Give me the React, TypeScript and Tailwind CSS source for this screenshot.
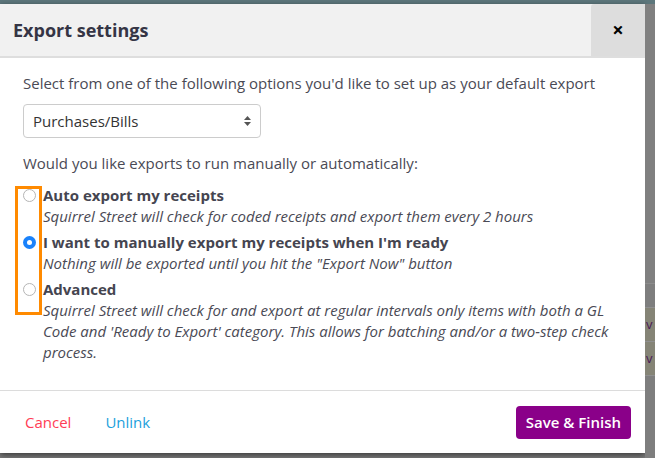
import React from "react"

const font = { fontFamily: '"Open Sans", "Liberation Sans", sans-serif' }

type Option = {
  title: string
  desc: string
  checked?: boolean
}

const options: Option[] = [
  {
    title: "Auto export my receipts",
    desc: "Squirrel Street will check for coded receipts and export them every 2 hours",
  },
  {
    title: "I want to manually export my receipts when I'm ready",
    desc: 'Nothing will be exported until you hit the "Export Now" button',
    checked: true,
  },
  {
    title: "Advanced",
    desc: "Squirrel Street will check for and export at regular intervals only items with both a GL Code and 'Ready to Export' category. This allows for batching and/or a two-step check process.",
  },
]

function Radio({ checked }: { checked?: boolean }) {
  if (checked) {
    return (
      <span className="flex h-[13px] w-[13px] items-center justify-center rounded-full bg-[#1a82fb]">
        <span className="h-[5px] w-[5px] rounded-full bg-white" />
      </span>
    )
  }
  return <span className="block h-[13px] w-[13px] rounded-full border border-[#b5b5b5] bg-white" />
}

export default function App() {
  return (
    <div className="flex h-[458px] w-[655px] flex-col overflow-hidden bg-[#7b7b7b]" style={font}>
      <div className="h-[4px] w-full shrink-0 bg-[#5d777c]" />
      <div className="flex flex-1">
        <div className="flex h-[449px] w-[645px] shrink-0 flex-col bg-white shadow-[0_2px_6px_rgba(0,0,0,0.55)]">
          {/* header */}
          <div className="flex h-[54px] shrink-0 items-stretch justify-between border-b-2 border-[#dedede] bg-[#f1f1f1]">
            <h2 className="flex items-center pl-[13px] text-[18px] font-bold text-[#353545]">Export settings</h2>
            <button className="flex w-[54px] items-center justify-center rounded-tl-[3px] bg-[#dddddd] text-[20px] font-bold leading-none text-black">
              ×
            </button>
          </div>

          {/* body */}
          <div className="flex-1 px-[23px] pt-[15px] text-[15px] text-[#4a4a55]">
            <p className="leading-[21px]">Select from one of the following options you'd like to set up as your default export</p>
            <div className="mt-[10px] flex h-[34px] w-[238px] items-center justify-between rounded-[4px] border border-[#cccccc] pl-[9px] pr-[9px]">
              <span className="text-[15px] text-[#333]">Purchases/Bills</span>
              <span className="flex flex-col items-center gap-[2px]">
                <svg width="7" height="4" viewBox="0 0 7 4"><path d="M0 4 L3.5 0 L7 4 Z" fill="#555" /></svg>
                <svg width="7" height="4" viewBox="0 0 7 4"><path d="M0 0 L3.5 4 L7 0 Z" fill="#555" /></svg>
              </span>
            </div>
            <p className="mt-[15px] leading-[21px]">Would you like exports to run manually or automatically:</p>

            <div className="relative mt-[11px] flex flex-col">
              <div className="pointer-events-none absolute left-[-8px] top-[1px] h-[129px] w-[27px] border-[3px] border-[#ff8a00]" />
              {options.map((o) => (
                <div key={o.title} className="flex gap-[7px] pb-[5px]">
                  <div className="pt-[4px]">
                    <Radio checked={o.checked} />
                  </div>
                  <div>
                    <div className="text-[15px] font-bold leading-[21px] text-[#454550]">{o.title}</div>
                    <div className="text-[15px] italic leading-[21px] text-[#4a4a55]">{o.desc}</div>
                  </div>
                </div>
              ))}
            </div>
          </div>

          {/* footer */}
          <div className="flex h-[63px] shrink-0 items-center justify-between border-t border-[#dcdcdc] pl-[25px] pr-[14px]">
            <div className="flex items-center gap-[34px] text-[15px]">
              <button className="text-[#ff3d55]">Cancel</button>
              <button className="text-[#1c9fdc]">Unlink</button>
            </div>
            <button className="h-[33px] rounded-[4px] bg-[#8a0089] px-[10px] text-[15px] font-semibold text-white">
              Save &amp; Finish
            </button>
          </div>
        </div>

        {/* backdrop content on the right */}
        <div className="flex flex-1 flex-col">
          <div className="h-[279px] bg-[#808080]" />
          <div className="h-[24px] border-t border-[#8c8c8c] bg-[#7e7e7e]" />
          <div className="flex h-[34px] items-center border-t border-[#8f8f8f] bg-[#858476] pl-[1px] text-[13px] text-[#4a1a55]">v</div>
          <div className="flex h-[34px] items-center border-t border-[#8f8f8f] bg-[#858476] pl-[1px] text-[13px] text-[#4a1a55]">v</div>
          <div className="flex-1 border-t border-[#8f8f8f] bg-[#7e7e7e]" />
        </div>
      </div>
    </div>
  )
}
